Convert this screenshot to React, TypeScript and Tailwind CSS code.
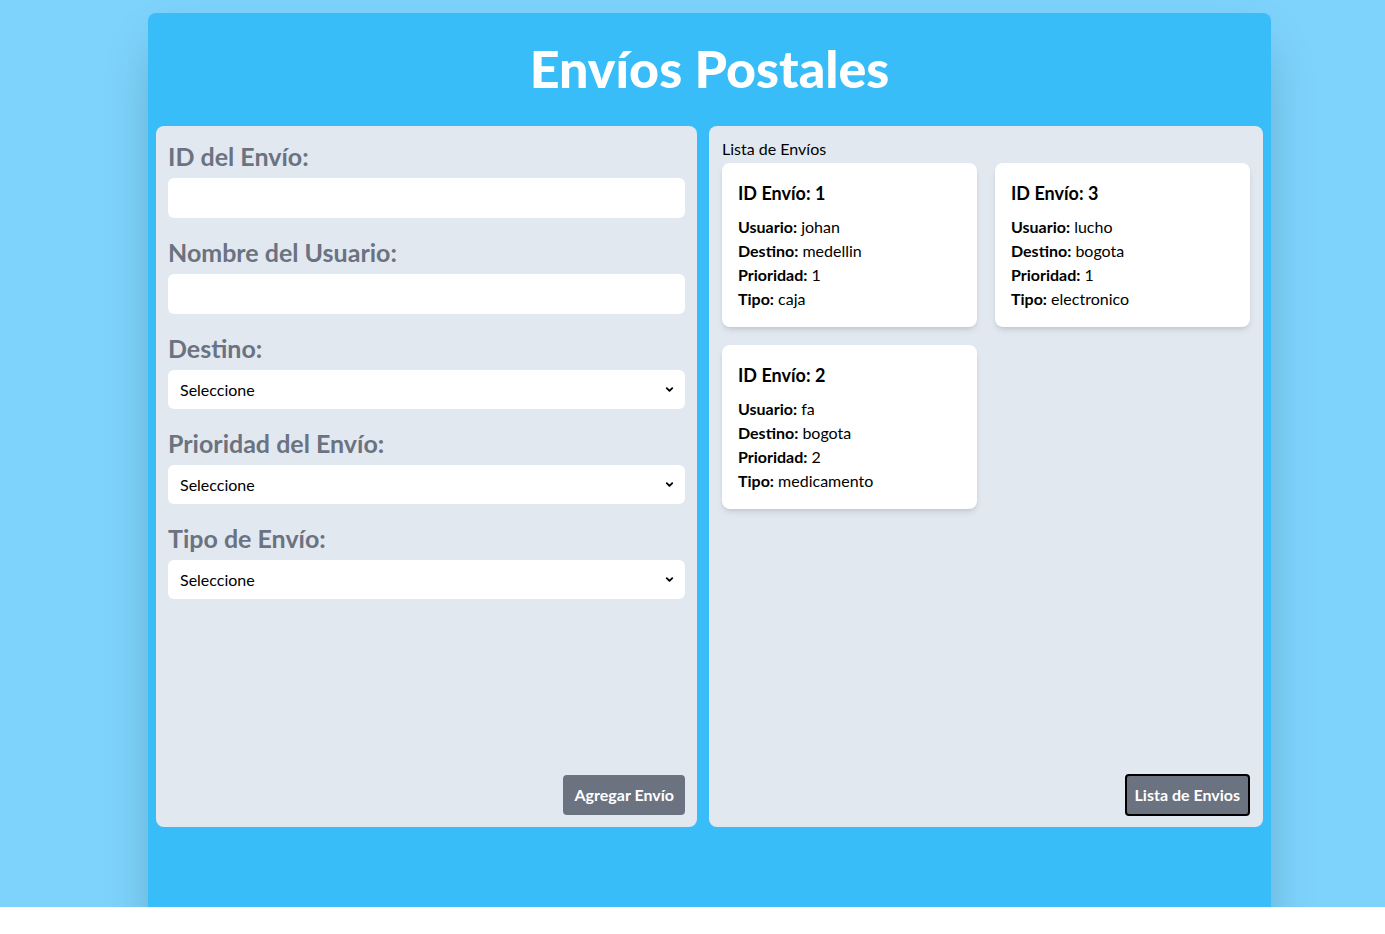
import { ChevronDown } from "lucide-react";

const envios = [
  { id: 1, usuario: "johan", destino: "medellin", prioridad: 1, tipo: "caja" },
  { id: 3, usuario: "lucho", destino: "bogota", prioridad: 1, tipo: "electronico" },
  { id: 2, usuario: "fa", destino: "bogota", prioridad: 2, tipo: "medicamento" },
];

const Label = ({ children }: { children: string }) => (
  <label className="mb-[6px] block h-8 text-[25px] leading-8 font-bold text-[#6b7280]">
    {children}
  </label>
);

const Select = () => (
  <div className="relative">
    <select className="h-[39px] w-full appearance-none rounded-md bg-white pl-3 text-base text-black outline-none">
      <option>Seleccione</option>
    </select>
    <ChevronDown
      className="pointer-events-none absolute top-[14px] right-[10px] h-[11px] w-[11px] text-black"
      strokeWidth={4}
    />
  </div>
);

const App = () => {
  return (
    <div className="h-[907px] overflow-hidden bg-[#7dd3fc] pt-[13px] font-['Lato',_sans-serif]">
      <div className="ml-[148px] h-[930px] w-[1123px] rounded-lg bg-[#38bdf8] px-2 shadow-2xl">
        <h1 className="flex h-[113px] items-center justify-center pb-1 text-[52px] font-black text-white">
          Envíos Postales
        </h1>
        <div className="flex gap-3">
          <form className="flex h-[701px] w-[541px] flex-col rounded-lg bg-[#e2e8f0] px-3 pt-[14px] pb-3">
            <div className="flex flex-col gap-[18px]">
              <div>
                <Label>ID del Envío:</Label>
                <input className="h-10 w-full rounded-md bg-white px-3 outline-none" />
              </div>
              <div>
                <Label>Nombre del Usuario:</Label>
                <input className="h-10 w-full rounded-md bg-white px-3 outline-none" />
              </div>
              <div>
                <Label>Destino:</Label>
                <Select />
              </div>
              <div>
                <Label>Prioridad del Envío:</Label>
                <Select />
              </div>
              <div>
                <Label>Tipo de Envío:</Label>
                <Select />
              </div>
            </div>
            <button
              type="button"
              className="mt-auto h-10 self-end rounded bg-[#6b7280] px-[11px] text-base font-bold text-white"
            >
              Agregar Envío
            </button>
          </form>
          <div className="flex h-[701px] flex-1 flex-col rounded-lg bg-[#e2e8f0] px-[13px] pt-[13px] pb-[11px]">
            <p className="h-[21px] text-base leading-5 text-black">Lista de Envíos</p>
            <div className="mt-[3px] grid grid-cols-2 gap-[18px]">
              {envios.map((e) => (
                <div key={e.id} className="rounded-lg bg-white p-4 text-black shadow-md">
                  <h3 className="mb-2 text-lg leading-7 font-bold">ID Envío: {e.id}</h3>
                  <p className="leading-6">
                    <b>Usuario:</b> {e.usuario}
                  </p>
                  <p className="leading-6">
                    <b>Destino:</b> {e.destino}
                  </p>
                  <p className="leading-6">
                    <b>Prioridad:</b> {e.prioridad}
                  </p>
                  <p className="leading-6">
                    <b>Tipo:</b> {e.tipo}
                  </p>
                </div>
              ))}
            </div>
            <button
              type="button"
              className="mt-auto h-[42px] self-end rounded border-2 border-black bg-[#6b7280] px-2 text-base font-bold text-white"
            >
              Lista de Envios
            </button>
          </div>
        </div>
      </div>
    </div>
  );
};

export default App;
